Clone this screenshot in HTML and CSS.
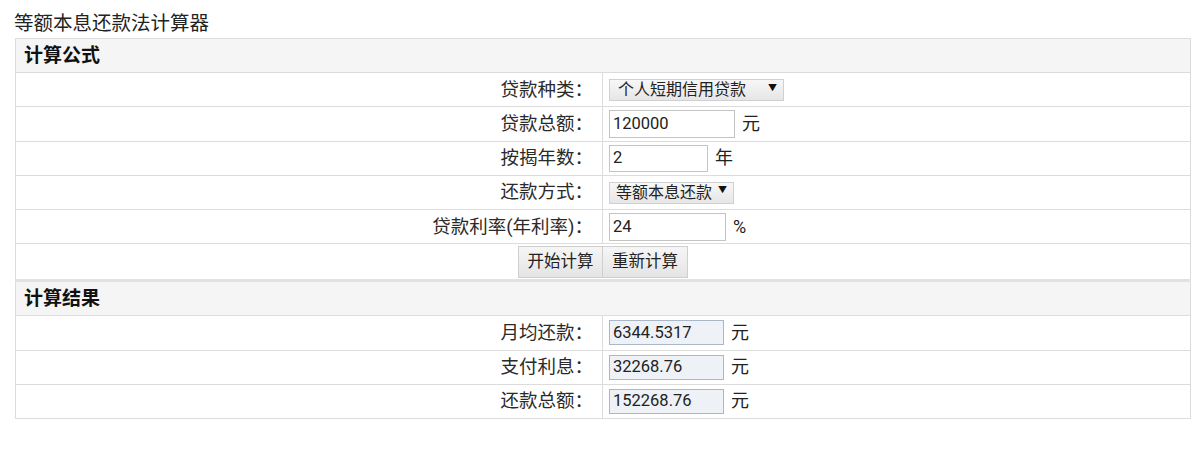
FILE: index.html
```html
<!DOCTYPE html>
<html lang="zh">
<head>
<meta charset="utf-8">
<title>等额本息还款法计算器</title>
<link rel="stylesheet" href="styles.css">
</head>
<body>
<div class="title">等额本息还款法计算器</div>
<table class="calc">
  <tr class="head"><td colspan="2">计算公式</td></tr>
  <tr>
    <td class="label">贷款种类：</td>
    <td class="field"><span class="select sel-wide">个人短期信用贷款<span class="arrow">▼</span></span></td>
  </tr>
  <tr>
    <td class="label">贷款总额：</td>
    <td class="field"><span class="input w-amount">120000</span><span class="unit">元</span></td>
  </tr>
  <tr>
    <td class="label">按揭年数：</td>
    <td class="field"><span class="input w-years">2</span><span class="unit">年</span></td>
  </tr>
  <tr>
    <td class="label">还款方式：</td>
    <td class="field"><span class="select sel-narrow">等额本息还款<span class="arrow">▼</span></span></td>
  </tr>
  <tr>
    <td class="label">贷款利率(年利率)：</td>
    <td class="field"><span class="input w-rate">24</span><span class="unit">%</span></td>
  </tr>
  <tr class="btn-row">
    <td colspan="2"><span class="btn">开始计算</span><span class="btn">重新计算</span></td>
  </tr>
  <tr class="head head2"><td colspan="2">计算结果</td></tr>
  <tr>
    <td class="label">月均还款：</td>
    <td class="field"><span class="input ro">6344.5317</span><span class="unit">元</span></td>
  </tr>
  <tr>
    <td class="label">支付利息：</td>
    <td class="field"><span class="input ro">32268.76</span><span class="unit">元</span></td>
  </tr>
  <tr>
    <td class="label">还款总额：</td>
    <td class="field"><span class="input ro">152268.76</span><span class="unit">元</span></td>
  </tr>
</table>
</body>
</html>
```
FILE: styles.css
```css
body {
  margin: 0;
  padding: 12px 15px 0 14px;
  background: #fff;
  color: #222;
  font-family: Roboto, "Noto Sans CJK SC", "Noto Sans", sans-serif;
}
.title {
  font-size: 19.5px;
  line-height: 24px;
  height: 26px;
}
.calc {
  width: 1176px;
  border-collapse: collapse;
  margin-left: 1px;
}
.calc td {
  border: 1px solid #dcdcdc;
  padding: 0;
  height: 33.2px;
  line-height: 22px;
  font-size: 18.5px;
  color: #2a2a2a;
}
.head td {
  background: #f5f5f5;
  font-weight: bold;
  font-size: 19px;
  color: #111;
  padding-left: 8px;
}
.head2 td {
  border-top: 3px solid #e2e2e2;
}
.label {
  width: 577px;
  text-align: right;
  padding-right: 9px !important;
  white-space: nowrap;
}
.field {
  padding-left: 6px !important;
}
.select {
  display: inline-flex;
  align-items: center;
  height: 22px;
  box-sizing: border-box;
  border: 1px solid #d0d0d0;
  background: linear-gradient(#f7f7f7, #e6e6e6);
  font-size: 16px;
  line-height: 20px;
  color: #222;
  padding-left: 8px;
  vertical-align: middle;
}
.sel-wide { width: 175px; }
.sel-narrow { width: 125px; padding-left: 6px; }
.arrow {
  font-size: 9px;
  margin-left: auto;
  margin-right: 6px;
  margin-bottom: 5px;
  line-height: 10px;
  color: #111;
}
.input {
  display: inline-flex;
  align-items: center;
  box-sizing: border-box;
  height: 28px;
  border: 1px solid #c4c4c4;
  background: #fff;
  font-size: 16.5px;
  line-height: 20px;
  color: #222;
  padding-left: 3px;
  vertical-align: middle;
}
.w-amount { width: 126px; }
.w-years { width: 99px; height: 27px; }
.w-rate { width: 117px; }
.ro {
  width: 115px;
  height: 25px;
  background: #eef2f6;
  border-color: #a8b8c8;
}
.unit {
  font-size: 18px;
  margin-left: 7px;
  vertical-align: middle;
  color: #222;
}
.btn-row td {
  text-align: center;
  height: 35px;
  font-size: 0;
}
.btn {
  display: inline-flex;
  align-items: center;
  justify-content: center;
  box-sizing: border-box;
  height: 32px;
  width: 85px;
  border: 1px solid #cfcfcf;
  background: linear-gradient(#f6f6f6, #e4e4e4);
  font-size: 16.5px;
  line-height: 20px;
  color: #222;
  vertical-align: middle;
}
.btn + .btn { border-left: none; }
```
